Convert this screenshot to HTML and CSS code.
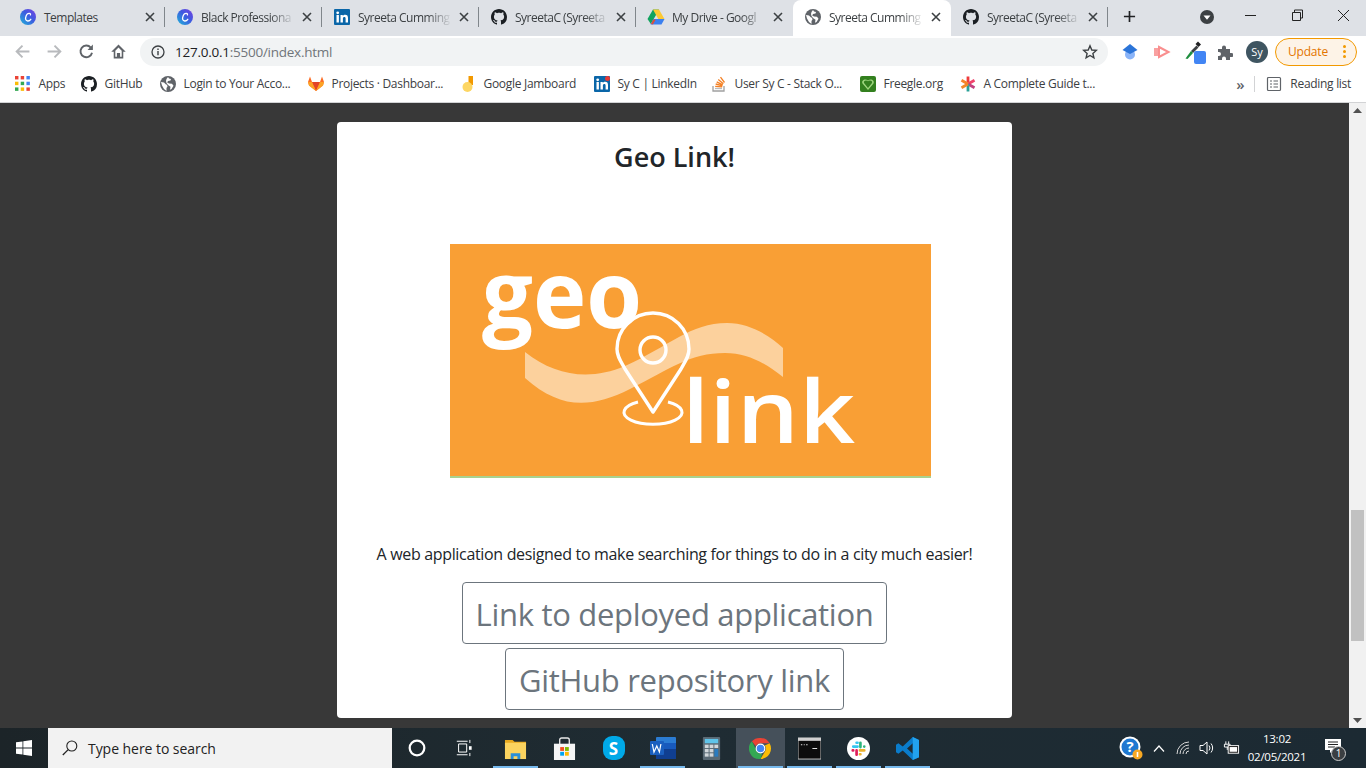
FILE: index.html
```html
<!DOCTYPE html>
<html lang="en">
<head>
<meta charset="utf-8">
<title>Syreeta Cummings</title>
<link rel="stylesheet" href="styles.css">
</head>
<body>
<svg class="defs" aria-hidden="true">
  <symbol id="i-github" viewBox="0 0 16 16"><path d="M8 0C3.58 0 0 3.58 0 8c0 3.54 2.29 6.53 5.47 7.59.4.07.55-.17.55-.38 0-.19-.01-.82-.01-1.49-2.01.37-2.53-.49-2.69-.94-.09-.23-.48-.94-.82-1.13-.28-.15-.68-.52-.01-.53.63-.01 1.08.58 1.23.82.72 1.21 1.87.87 2.33.66.07-.52.28-.87.51-1.07-1.78-.2-3.64-.89-3.64-3.95 0-.87.31-1.59.82-2.15-.08-.2-.36-1.02.08-2.12 0 0 .67-.21 2.2.82.64-.18 1.32-.27 2-.27.68 0 1.36.09 2 .27 1.53-1.04 2.2-.82 2.2-.82.44 1.1.16 1.92.08 2.12.51.56.82 1.27.82 2.15 0 3.07-1.87 3.75-3.65 3.95.29.25.54.73.54 1.48 0 1.07-.01 1.93-.01 2.2 0 .21.15.46.55.38A8.013 8.013 0 0016 8c0-4.42-3.58-8-8-8z" fill="#1b1f23"/></symbol>
  <symbol id="i-globe" viewBox="0 0 16 16"><circle cx="8" cy="8" r="8" fill="#5f6368"/><path d="M1 6l3 .5 2 2 1 .2.5 1.8-1 1.5v3L4 13 2 9.500zM8 1l1 1.500 2 .5-.5 1.500L8 5 7.200 6.500 9 7.500l3 .2 1.500 2-2 3.300-1.500.8.5-3-2.500-1.800L6.500 7l-.5-2 .5-2z" fill="#fff"/></symbol>
  <symbol id="i-canva" viewBox="0 0 16 16"><defs><linearGradient id="cg" x1="0" y1="1" x2="1" y2="0"><stop offset="0" stop-color="#1fb6d8"/><stop offset=".55" stop-color="#3d5be0"/><stop offset="1" stop-color="#7b3fe0"/></linearGradient></defs><circle cx="8" cy="8" r="8" fill="url(#cg)"/><path d="M10.800 10.300c-.8 1.200-2 1.800-3.100 1.700-1.800-.2-2.500-1.800-2-3.700C6.200 6.200 7.700 4.300 9.400 4.400c.9.100 1.300.8 1 1.500" fill="none" stroke="#fff" stroke-width="1.300" stroke-linecap="round"/></symbol>
  <symbol id="i-linkedin" viewBox="0 0 16 16"><rect width="16" height="16" rx="1" fill="#0a66a8"/><rect x="2.500" y="6" width="2.400" height="7.500" fill="#fff"/><circle cx="3.700" cy="3.800" r="1.400" fill="#fff"/><path d="M6.500 6h2.300v1.100c.5-.8 1.300-1.300 2.400-1.300 2 0 2.800 1.200 2.800 3.300v4.400h-2.400V9.600c0-1-.3-1.700-1.200-1.700-1 0-1.500.7-1.500 1.700v3.900H6.500z" fill="#fff"/></symbol>
  <symbol id="i-drive" viewBox="0 0 18 16"><path d="M6 .5h6L9 6 3.800 15 .5 10z" fill="#12a35f"/><path d="M6 .5h6l5.500 9.500h-6.200z" fill="#fcc934"/><path d="M6.300 10h11.200l-3 5.500H3.500z" fill="#3b80f0"/><path d="M3.800 15 6.300 10.500h2.500L6 15.500z" fill="#d9503f"/></symbol>
  <symbol id="i-close" viewBox="0 0 10 10"><path d="M1 1l8 8M9 1l-8 8" fill="none" stroke="#3c4043" stroke-width="1.600"/></symbol>
</svg>

<header class="tabstrip">
  <div class="tab sep"><svg class="fav"><use href="#i-canva"/></svg><span class="tab-title">Templates</span><svg class="tab-x"><use href="#i-close"/></svg></div>
  <div class="tab sep"><svg class="fav"><use href="#i-canva"/></svg><span class="tab-title tab-fade">Black Professiona</span><svg class="tab-x"><use href="#i-close"/></svg></div>
  <div class="tab sep"><svg class="fav"><use href="#i-linkedin"/></svg><span class="tab-title tab-fade">Syreeta Cumming</span><svg class="tab-x"><use href="#i-close"/></svg></div>
  <div class="tab sep"><svg class="fav"><use href="#i-github"/></svg><span class="tab-title tab-fade">SyreetaC (Syreeta</span><svg class="tab-x"><use href="#i-close"/></svg></div>
  <div class="tab"><svg class="fav fav-wide"><use href="#i-drive"/></svg><span class="tab-title tab-fade">My Drive - Googl</span><svg class="tab-x"><use href="#i-close"/></svg></div>
  <div class="tab tab-active"><svg class="fav"><use href="#i-globe"/></svg><span class="tab-title tab-fade">Syreeta Cumming</span><svg class="tab-x"><use href="#i-close"/></svg></div>
  <div class="tab sep"><svg class="fav"><use href="#i-github"/></svg><span class="tab-title tab-fade">SyreetaC (Syreeta</span><svg class="tab-x"><use href="#i-close"/></svg></div>
  <svg class="newtab" viewBox="0 0 14 14"><path d="M7 1v12M1 7h12" stroke="#202124" stroke-width="1.800"/></svg>
  <div class="strip-right">
    <svg class="tabsearch" viewBox="0 0 14 14"><circle cx="7" cy="7" r="7" fill="#3c4043"/><path d="M3.500 5.500h7L7 9.800z" fill="#fff"/></svg>
    <div class="winctl">
      <svg viewBox="0 0 46 20"><path d="M17 10.500h11" stroke="#222" stroke-width="1"/></svg>
      <svg viewBox="0 0 46 20"><path d="M18.500 7.500h8v8h-8zM20.500 7.500v-2.500h8v8h-2" fill="none" stroke="#222" stroke-width="1"/></svg>
      <svg viewBox="0 0 46 20"><path d="M18 5l11 11M29 5 18 16" stroke="#222" stroke-width="1"/></svg>
    </div>
  </div>
</header>

<nav class="toolbar">
  <svg class="tb-ico" viewBox="0 0 16 16"><path d="M14.500 8H2.500M8 2.500 2.500 8 8 13.500" fill="none" stroke="#b8babd" stroke-width="1.800"/></svg>
  <svg class="tb-ico" viewBox="0 0 16 16"><path d="M1.500 8h12M8 2.500 13.500 8 8 13.500" fill="none" stroke="#b8babd" stroke-width="1.800"/></svg>
  <svg class="tb-ico" viewBox="0 0 16 16"><path d="M13.200 9.200A5.500 5.500 0 1 1 12 4.300" fill="none" stroke="#5f6368" stroke-width="1.800"/><path d="M14 1.500v5H9z" fill="#5f6368"/></svg>
  <svg class="tb-ico" viewBox="0 0 16 16"><path d="M8 1.500 1.200 8.200h2.300v6.300h9V8.200h2.300zM5 13V7.200l3-3 3 3V13H9.500V9.500h-3V13z" fill="#5f6368" fill-rule="evenodd"/></svg>
  <div class="omnibox">
    <svg class="omni-info" viewBox="0 0 14 14"><circle cx="7" cy="7" r="6" fill="none" stroke="#3c4043" stroke-width="1.300"/><path d="M7 6v4.200M7 3.600v1.400" stroke="#3c4043" stroke-width="1.400"/></svg>
    <span class="url"><span class="url-host">127.0.0.1</span>:5500/index.html</span>
    <svg class="omni-star" viewBox="0 0 16 16"><path d="M8 1.800 9.800 6l4.500.4-3.400 3 1 4.400L8 11.500l-3.900 2.300 1-4.400-3.400-3L6.200 6z" fill="none" stroke="#3c4043" stroke-width="1.400"/></svg>
  </div>
  <div class="ext-row">
    <svg class="ext" viewBox="0 0 18 18"><circle cx="9" cy="11.500" r="5" fill="#8ab4f8"/><path d="M9 1 16.500 7 9 11 1.500 7z" fill="#2b74d8"/></svg>
    <svg class="ext" viewBox="0 0 18 18"><rect x="1" y="5" width="5" height="8" fill="#f9a1a1"/><path d="M6 4 15.500 9 6 14z" fill="none" stroke="#f98f8f" stroke-width="2"/></svg>
    <svg class="ext ext-drop" viewBox="0 0 22 24"><path d="M14 1.500l3 3-2.500 2.500-3-3z" fill="#202124"/><path d="M12.500 5.500 14.500 7.500 9 13l-2-2z" fill="#3c4043"/><path d="M7 11l2 2-5.500 6-2-.5z" fill="#1e8e3e"/><rect x="10" y="11" width="12" height="13" rx="2" fill="#4285f4"/></svg>
    <svg class="ext ext-puzzle" viewBox="0 0 16 16"><path d="M1 5h4V3.500a2 2 0 0 1 4 0V5h4v4h1.500a2 2 0 0 1 0 4H13v3H9v-1.500a2 2 0 0 0-4 0V16H1v-4h1a2 2 0 0 0 0-4H1z" fill="#5f6368"/></svg>
    <div class="avatar">Sy</div>
    <div class="update"><span>Update</span><span class="update-dots"><i></i><i></i><i></i></span></div>
  </div>
</nav>

<nav class="bookmarks">
  <div class="bm"><svg class="bm-ico" viewBox="0 0 14 14"><g><rect x="0" y="0" width="3" height="3" fill="#ea4335"/><rect x="5" y="0" width="3" height="3" fill="#ea4335"/><rect x="10" y="0" width="3" height="3" fill="#4285f4"/><rect x="0" y="5" width="3" height="3" fill="#fbbc05"/><rect x="5" y="5" width="3" height="3" fill="#34a853"/><rect x="10" y="5" width="3" height="3" fill="#4285f4"/><rect x="0" y="10" width="3" height="3" fill="#34a853"/><rect x="5" y="10" width="3" height="3" fill="#fbbc05"/><rect x="10" y="10" width="3" height="3" fill="#ea4335"/></g></svg><span>Apps</span></div>
  <div class="bm"><svg class="bm-ico"><use href="#i-github"/></svg><span>GitHub</span></div>
  <div class="bm"><svg class="bm-ico"><use href="#i-globe"/></svg><span>Login to Your Acco...</span></div>
  <div class="bm"><svg class="bm-ico" viewBox="0 0 16 16"><path d="M8 15 1 9.500 0 6 2 0.500 4 6h8L14 .5 16 6l-1 3.500z" fill="#fc6d26"/><path d="M8 15 4 6h8z" fill="#e24329"/><path d="M8 15 1 9.500 0 6h4z" fill="#fca326"/><path d="M8 15l7-5.500L16 6h-4z" fill="#fca326"/></svg><span>Projects · Dashboar...</span></div>
  <div class="bm"><svg class="bm-ico" viewBox="0 0 16 16"><path d="M8.500 0h4.500v9H8.500z" fill="#f29900"/><circle cx="7.500" cy="11" r="5" fill="#fdd663"/></svg><span>Google Jamboard</span></div>
  <div class="bm"><svg class="bm-ico" viewBox="0 0 16 16"><use href="#i-linkedin" width="16" height="16"/><circle cx="13.500" cy="2.500" r="2.500" fill="#e53935"/></svg><span>Sy C | LinkedIn</span></div>
  <div class="bm"><svg class="bm-ico" viewBox="0 0 16 16"><path d="M2 10v5h11v-5" fill="none" stroke="#a0a0a0" stroke-width="1.300"/><path d="M4 12.500h7" stroke="#bcbbbb" stroke-width="1.300"/><path d="M4.200 10.300l7 .6M4.700 8l6.800 1.800M5.700 5.800l6 3.100M7.300 3.500l5 4.300M9.500 1.200l4 5.300" stroke="#f48024" stroke-width="1.300"/></svg><span>User Sy C - Stack O...</span></div>
  <div class="bm"><svg class="bm-ico" viewBox="0 0 16 16"><rect width="16" height="16" rx="2" fill="#33801f"/><path d="M8 14 2.500 7.500c-1.500-3 2.500-5.500 5.500-3 3-2.500 7 0 5.500 3z" fill="#9fd67f"/><path d="M8 12 4 7c-1-2 2-3.500 4-1.800C10 3.500 13 5 12 7z" fill="#33801f"/></svg><span>Freegle.org</span></div>
  <div class="bm"><svg class="bm-ico" viewBox="0 0 16 16"><g stroke-width="2.800"><path d="M8 8V.5" stroke="#ee3b3b"/><path d="M8 8 14.500 4.200" stroke="#f0436b"/><path d="M8 8l6.500 3.800" stroke="#c2407f"/><path d="M8 8v7.500" stroke="#2aa198"/><path d="M8 8 1.500 11.800" stroke="#f08a2a"/><path d="M8 8 1.500 4.200" stroke="#f5842a"/></g></svg><span>A Complete Guide t...</span></div>
  <div class="bm-end">
    <span class="chev">»</span>
    <span class="bm-sep"></span>
    <svg class="bm-ico" viewBox="0 0 16 16"><rect x="1.500" y="1.500" width="13" height="13" rx="1" fill="none" stroke="#5f6368" stroke-width="1.200"/><path d="M4 5h2M4 8h2M4 11h2M7.500 5H12M7.500 8H12M7.500 11H12" stroke="#5f6368" stroke-width="1.100"/></svg>
    <span>Reading list</span>
  </div>
</nav>

<div class="page">
  <main class="viewport">
    <section class="card">
      <h2 class="card-title">Geo Link!</h2>
      <svg class="logo" viewBox="0 0 481 234">
        <rect width="481" height="234" fill="#f99f35"/>
        <rect y="232" width="481" height="2" fill="#a9d18e"/>
        <path d="M75 108C105 132 140 137 175 122 220 102 240 79 277 79 300 79 320 92 333 104V133C315 119 298 109 275 109 240 109 220 125 180 145 140 165 110 165 75 134Z" fill="#fcd19d"/>
        <text class="logo-geo" x="32" y="84" textLength="160" lengthAdjust="spacingAndGlyphs">geo</text>
        <path d="M203 168 175 125C170 116 167 112 167 105 167 85 183 69 203 69S239 85 239 105C239 112 236 116 231 125Z" fill="none" stroke="#fff" stroke-width="3.400" stroke-linejoin="round"/>
        <circle cx="203" cy="106" r="13" fill="none" stroke="#fff" stroke-width="3.400"/>
        <path d="M188 158A29 12 0 1 0 218 158" fill="none" stroke="#fff" stroke-width="3"/>
        <text class="logo-link" x="232" y="199" textLength="173" lengthAdjust="spacingAndGlyphs">link</text>
      </svg>
      <p class="card-text">A web application designed to make searching for things to do in a city much easier!</p>
      <a class="btn">Link to deployed application</a>
      <a class="btn">GitHub repository link</a>
    </section>
  </main>
  <aside class="scrollbar">
    <svg class="sb-arrow" viewBox="0 0 9 5"><path d="M4.500 0 9 5H0z" fill="#505050"/></svg>
    <div class="sb-thumb"></div>
    <svg class="sb-arrow" viewBox="0 0 9 5"><path d="M4.500 5 9 0H0z" fill="#505050"/></svg>
  </aside>
</div>

<footer class="taskbar">
  <div class="start"><svg viewBox="0 0 16 16"><path d="M0 2.300 6.500 1.400V7.500H0zM7.300 1.300 16 0V7.500H7.300zM0 8.400h6.500v6.200L0 13.700zM7.300 8.400H16V16l-8.700-1.200z" fill="#fff"/></svg></div>
  <div class="search"><svg viewBox="0 0 16 16"><circle cx="9.800" cy="6" r="5" fill="none" stroke="#222" stroke-width="1.100"/><path d="M6.200 9.600.8 15" stroke="#222" stroke-width="1.300"/></svg><span>Type here to search</span></div>
  <div class="tk-item"><svg class="tk-sm" viewBox="0 0 16 16"><circle cx="8" cy="8" r="6.500" fill="none" stroke="#fff" stroke-width="2"/></svg></div>
  <div class="tk-item tk-narrow"><svg class="tk-sm" viewBox="0 0 18 20"><path d="M3 5.500h9v9H3zM1 2.500h12M1 17.500h12M15.500 1v3.500M15.500 15.500V19" fill="none" stroke="#fff" stroke-width="1.100"/><rect x="14.500" y="8" width="3" height="4" fill="#fff"/></svg></div>
  <div class="tk-item tk-open"><svg class="tk-lg" viewBox="0 0 24 24"><path d="M1 3h8l2 2h12v3H1z" fill="#e8a91f"/><rect x="1" y="6" width="22" height="17" fill="#fbd35f"/><path d="M7 23v-6h10v6h-3v-3h-4v3z" fill="#2a8fd8"/></svg></div>
  <div class="tk-item"><svg class="tk-lg" viewBox="0 0 24 24"><path d="M7 8V3a2 2 0 0 1 2-2h6a2 2 0 0 1 2 2v5" fill="none" stroke="#e8e8e8" stroke-width="1.400"/><rect x="1" y="7" width="22" height="17" fill="#f5f5f5"/><rect x="7.500" y="10.500" width="4" height="4" fill="#f25022"/><rect x="12.500" y="10.500" width="4" height="4" fill="#7fba00"/><rect x="7.500" y="15.500" width="4" height="4" fill="#00a4ef"/><rect x="12.500" y="15.500" width="4" height="4" fill="#ffb900"/></svg></div>
  <div class="tk-item"><div class="skype">S</div></div>
  <div class="tk-item tk-open"><svg class="tk-xl" viewBox="0 0 26 24"><rect x="6" y="1" width="20" height="22" rx="1" fill="#2b7cd3"/><rect x="6" y="7" width="20" height="6" fill="#185abd"/><rect x="6" y="13" width="20" height="10" fill="#103f91"/><rect x="0" y="5" width="14" height="14" rx="1" fill="#1a5fbf"/><path d="M2.300 8 4 16l2.800-6 2.600 6 1.500-8" fill="none" stroke="#fff" stroke-width="1.200"/></svg></div>
  <div class="tk-item"><svg class="tk-lg" viewBox="0 0 18 24"><rect width="18" height="24" rx="1" fill="#5a6a75"/><rect x="2" y="2" width="14" height="4.500" fill="#5fc4ea"/><g fill="#d0d6da"><rect x="2" y="8" width="4" height="3.500"/><rect x="7" y="8" width="4" height="3.500"/><rect x="12" y="8" width="4" height="3.500"/><rect x="2" y="12.500" width="4" height="3.500"/><rect x="7" y="12.500" width="4" height="3.500"/><rect x="2" y="17" width="4" height="3.500"/><rect x="7" y="17" width="4" height="3.500"/></g><rect x="12" y="12.500" width="4" height="8" fill="#2a7bbf"/></svg></div>
  <div class="tk-item tk-open tk-active"><svg class="tk-lg" viewBox="0 0 24 24"><path d="M12 1a11 11 0 0 1 9.500 5.500H12a5.500 5.500 0 0 0-5 3L3 4.500A11 11 0 0 1 12 1z" fill="#ea4335"/><path d="M21.500 6.500A11 11 0 0 1 12 23l4.800-8.200A5.500 5.500 0 0 0 16.500 8.800z" fill="#fbbc05"/><path d="M12 23A11 11 0 0 1 3 4.500L7.800 14a5.500 5.500 0 0 0 6 3.200z" fill="#34a853"/><circle cx="12" cy="12" r="4.500" fill="#4285f4" stroke="#fff" stroke-width="1.200"/></svg></div>
  <div class="tk-item tk-open"><svg class="tk-lg" viewBox="0 0 24 24"><rect y="1" width="24" height="22" fill="#0c0c0c" stroke="#c8c8c8" stroke-width="1"/><rect y="1" width="24" height="3" fill="#d0d0d0"/><path d="M3 8h1.500M6 8h1M8.500 8h1.500M15 12h5" stroke="#e0e0e0" stroke-width="1.100"/></svg></div>
  <div class="tk-item tk-open"><svg class="tk-lg" viewBox="0 0 24 24"><circle cx="12" cy="12" r="12" fill="#fff"/><g stroke-width="2.800" stroke-linecap="round"><path d="M6.500 10H11M10 6h1" stroke="#36c5f0"/><path d="M14 6v4.500M18 10h0" stroke="#2eb67d"/><path d="M13.500 14H18M13.500 18h.5" stroke="#ecb22e"/><path d="M10 14v4.500M6 14h.5" stroke="#e01e5a"/></g></svg></div>
  <div class="tk-item tk-open"><svg class="tk-lg" viewBox="0 0 24 24"><path d="M17.500 0 24 3v18l-6.500 3L7 14 2.500 17.500 0 16V8l2.500-1.500L7 10zM17.500 6.500 11.500 12l6 5.500z" fill="#0a7ccb" fill-rule="evenodd"/><path d="M17.500 0 24 3v18l-6.500 3z" fill="#22a2ee"/></svg></div>
  <div class="tray">
    <svg class="tray-help" viewBox="0 0 24 24"><circle cx="11" cy="11" r="10.500" fill="#fff"/><circle cx="11" cy="11" r="8.500" fill="#1f78d1"/><text x="11" y="16" class="help-q">?</text><circle cx="18.500" cy="18.500" r="5" fill="#f7a823"/><path d="M18.500 16v5" stroke="#fff" stroke-width="1.600"/></svg>
    <svg class="tray-chev" viewBox="0 0 12 7"><path d="M1 6.500 6 1l5 5.500" fill="none" stroke="#fff" stroke-width="1.200"/></svg>
    <svg class="tray-wifi" viewBox="0 0 14 14"><path d="M1 13A12 12 0 0 1 13 1M4 13A9 9 0 0 1 13 4M7 13a6 6 0 0 1 6-6M10 13a3 3 0 0 1 3-3" fill="none" stroke="#d8d8d8" stroke-width="1"/></svg>
    <svg class="tray-vol" viewBox="0 0 16 16"><path d="M1 5.500h3L8 2v12l-4-3.500H1z" fill="none" stroke="#fff" stroke-width="1"/><path d="M10 5.500a4 4 0 0 1 0 5M12 3.500a7 7 0 0 1 0 9" fill="none" stroke="#fff" stroke-width="1"/></svg>
    <svg class="tray-bat" viewBox="0 0 18 14"><path d="M3 0v3M6 0v3M1.500 3h6v3h-6zM4.500 6v3" stroke="#fff" stroke-width="1" fill="none"/><rect x="5.500" y="4.500" width="11" height="8" fill="#111" stroke="#fff"/><rect x="7" y="6" width="8" height="5" fill="#fff"/></svg>
    <div class="clock"><span>13:02</span><span>02/05/2021</span></div>
    <div class="notif"><svg viewBox="0 0 16 16"><path d="M0 0h16v11H8l-3 3v-3H0z" fill="#fff"/><path d="M3 3h10M3 5.500h10M3 8h7" stroke="#222" stroke-width="1"/></svg><span class="notif-badge">1</span></div>
  </div>
</footer>
</body>
</html>
```

FILE: styles.css
```css
* { box-sizing: border-box; }
html, body { margin: 0; height: 100%; overflow: hidden; }
body {
  width: 1366px;
  height: 768px;
  display: flex;
  flex-direction: column;
  font-family: "Open Sans", "Liberation Sans", sans-serif;
  color: #202124;
}
.defs { position: absolute; width: 0; height: 0; }

/* tab strip */
.tabstrip { height: 36px; flex: none; background: #dee1e6; display: flex; padding-left: 8px; align-items: stretch; }
.tab { position: relative; width: 157px; display: flex; align-items: center; padding: 0 8px 2px 12px; font-size: 12px; letter-spacing: -.5px; color: #3c4043; }
.tab.sep::after { content: ""; position: absolute; right: 0; top: 7px; height: 20px; width: 1px; background: #80868b; }
.tab-active { background: #fff; border-radius: 8px 8px 0 0; width: 158px; color: #3c4043; }
.fav { width: 16px; height: 16px; flex: none; }
.fav-wide { width: 18px; margin-left: -1px; margin-right: -1px; }
.tab-title { flex: 1; min-width: 0; margin: 0 9px 0 8px; white-space: nowrap; }
.tab-fade { -webkit-mask-image: linear-gradient(90deg, #000 75%, transparent 102%); mask-image: linear-gradient(90deg, #000 75%, transparent 102%); }
.tab-x { width: 10px; height: 10px; flex: none; margin-right: 2px; }
.newtab { width: 13px; height: 13px; margin: 10px 0 0 15px; flex: none; }
.strip-right { margin-left: auto; display: flex; }
.tabsearch { width: 14px; height: 14px; margin: 10px 14px 0 0; }
.winctl { display: flex; }
.winctl svg { width: 46px; height: 20px; margin-top: 5px; }

/* toolbar */
.toolbar { height: 31px; flex: none; background: #fff; display: flex; align-items: center; padding: 0 8px 0 14px; position: relative; }
.tb-ico { width: 17px; height: 17px; flex: none; margin-right: 15px; }
.omnibox { width: 968px; height: 28px; margin-left: -2px; border-radius: 14px; background: #f1f3f4; display: flex; align-items: center; padding: 0 10px 0 11px; font-size: 13.500px; flex: none; }
.omni-info { width: 14px; height: 14px; margin-right: 10px; }
.url { color: #70757a; letter-spacing: -.25px; }
.url-host { color: #202124; }
.omni-star { width: 16px; height: 16px; margin-left: auto; }
.ext-row { display: flex; align-items: center; margin-left: 13px; }
.ext { width: 18px; height: 18px; margin-right: 14px; flex: none; }
.ext-drop { width: 22px; height: 24px; margin: 0 11px 0 -1px; }
.ext-puzzle { width: 16px; height: 16px; margin-right: 15px; }
.avatar { width: 22px; height: 22px; border-radius: 50%; background: #3f5561; color: #fff; font-size: 11px; display: flex; align-items: center; justify-content: center; margin: 0 7px 0 -2px; flex: none; }
.update { width: 82px; height: 28px; border: 1px solid #f29900; border-radius: 14px; background: #fdf3e7; color: #e37400; font-size: 12px; display: flex; align-items: center; padding: 0 10px 0 12px; justify-content: space-between; flex: none; letter-spacing: -.2px; }
.update-dots { display: flex; flex-direction: column; gap: 2px; }
.update-dots i { width: 3px; height: 3px; border-radius: 50%; background: #f29900; }

/* bookmarks */
.bookmarks { height: 36px; flex: none; background: #fff; border-bottom: 1px solid #d2d3d5; display: grid; grid-template-columns: 66px 79px 148px 152px 134px 117px 149px 100px 278px 1fr; padding: 0 0 2px 7px; align-items: center; font-size: 12px; letter-spacing: -.3px; color: #3c4043; }
.bm { display: flex; align-items: center; gap: 7.500px; padding-left: 8px; white-space: nowrap; overflow: hidden; }
.bm-ico { width: 16px; height: 16px; flex: none; }
.bm-end { display: flex; align-items: center; white-space: nowrap; justify-self: end; padding-right: 15px; }
.chev { font-size: 15px; line-height: 16px; font-weight: 600; color: #5f6368; margin-right: 10px; }
.bm-sep { width: 1px; height: 16px; background: #d2d3d5; margin-right: 11px; }
.bm-end .bm-ico { margin-right: 8px; }

/* page */
.page { flex: 1; min-height: 0; display: flex; background: #383838; }
.viewport { flex: 1; padding-top: 19px; display: flex; justify-content: center; align-items: flex-start; overflow: hidden; }
.card { width: 675px; height: 596px; background: #fff; border-radius: 4px; display: flex; flex-direction: column; align-items: center; padding-top: 16px; }
.card-title { margin: 0; font-size: 27px; line-height: 38px; font-weight: 600; color: #212529; }
.logo { width: 481px; height: 234px; margin: 68px 0 0 31px; flex: none; overflow: visible; }
.logo-geo { font-family: "Open Sans", sans-serif; font-weight: 700; font-size: 94px; fill: #fff; }
.logo-link { font-family: "Open Sans", sans-serif; font-weight: 600; font-size: 87px; fill: #fff; }
.card-text { margin: 64px 0 0; font-size: 16px; line-height: 24px; color: #212529; letter-spacing: -.33px; white-space: nowrap; }
.btn { display: block; margin-top: 4px; padding: 14px 13px 12px; border: 1px solid #6c757d; border-radius: 4px; color: #6c757d; font-size: 31px; line-height: 34px; white-space: nowrap; letter-spacing: -.3px; }
.card-text + .btn { margin-top: 16px; }
.scrollbar { width: 17px; flex: none; background: #f1f1f1; display: flex; flex-direction: column; align-items: center; padding: 5px 0; }
.sb-arrow { width: 9px; height: 5px; flex: none; }
.sb-thumb { width: 13px; height: 131px; background: #c1c1c1; margin-top: 397px; margin-bottom: auto; }

/* taskbar */
.taskbar { height: 40px; flex: none; display: flex; background: linear-gradient(90deg, #1c2428, #1f2c33 50%, #1c2a33); color: #fff; position: relative; }
.start { width: 48px; display: flex; align-items: center; justify-content: center; }
.start svg { width: 16px; height: 16px; }
.search { width: 344px; background: #f2f2f2; display: flex; align-items: center; padding-left: 14px; color: #222; font-size: 14px; letter-spacing: -.05px; }
.search svg { width: 16px; height: 16px; margin-right: 10px; }
.tk-item { width: 49px; display: flex; align-items: center; justify-content: center; position: relative; flex: none; }
.tk-narrow { width: 50px; padding-right: 5px; }
.tk-open::after { content: ""; position: absolute; left: 2px; right: 2px; bottom: 0; height: 2px; background: #76b9ed; }
.tk-active { background: #45505a; }
.tk-sm { width: 18px; height: 18px; }
.tk-lg { width: 23px; height: 23px; }
.tk-xl { width: 26px; height: 24px; }
.skype { width: 22px; height: 24px; border-radius: 9px; background: #00a9e8; color: #fff; font-weight: 700; font-size: 17px; display: flex; align-items: center; justify-content: center; }
.tray { margin-left: auto; display: flex; align-items: center; padding-right: 20px; }
.tray-help { width: 24px; height: 24px; margin-right: 10px; }
.help-q { font-family: "Open Sans", sans-serif; font-weight: 700; font-size: 15px; fill: #fff; text-anchor: middle; }
.tray-chev { width: 12px; height: 7px; margin-right: 11px; }
.tray-wifi { width: 14px; height: 14px; margin-right: 9px; }
.tray-vol { width: 16px; height: 16px; margin-right: 8px; }
.tray-bat { width: 17px; height: 14px; margin-right: 8px; }
.clock { width: 58px; display: flex; flex-direction: column; align-items: center; font-size: 11.500px; line-height: 18px; letter-spacing: -.25px; margin-right: 18px; }
.notif { position: relative; width: 22px; height: 26px; }
.notif svg { width: 16px; height: 16px; position: absolute; left: 1px; top: 4px; }
.notif-badge { position: absolute; right: 0; bottom: 0; width: 15px; height: 15px; border-radius: 50%; background: #3b3f42; border: 1px solid #ccc; font-size: 10px; line-height: 13px; text-align: center; }
```
